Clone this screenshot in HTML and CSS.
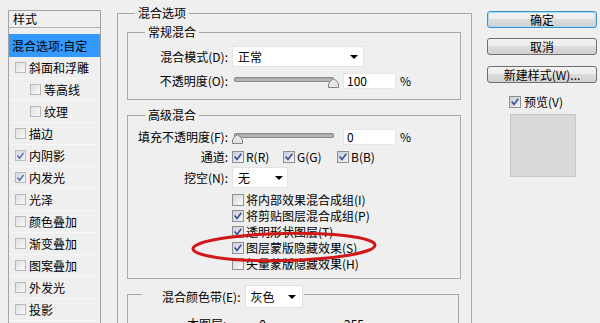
FILE: index.html
```html
<!DOCTYPE html>
<html lang="zh-CN">
<head>
<meta charset="utf-8">
<title>图层样式</title>
<link rel="stylesheet" href="styles.css">
</head>
<body>
<div class="dialog">
  <div class="styles-panel">
    <div class="sp-title">样式</div>
    <div class="sp-active">混合选项:自定</div>
    <div class="sp-item"><span class="cb sm"></span>斜面和浮雕</div>
    <div class="sp-item sub"><span class="cb sm"></span>等高线</div>
    <div class="sp-item sub"><span class="cb sm"></span>纹理</div>
    <div class="sp-item"><span class="cb sm"></span>描边</div>
    <div class="sp-item"><span class="cb sm on"><svg class="ck" viewBox="0 0 11 11"><path d="M2.3 5.6 L4.4 8.2 L8.6 2.6"/></svg></span>内阴影</div>
    <div class="sp-item"><span class="cb sm on"><svg class="ck" viewBox="0 0 11 11"><path d="M2.3 5.6 L4.4 8.2 L8.6 2.6"/></svg></span>内发光</div>
    <div class="sp-item"><span class="cb sm"></span>光泽</div>
    <div class="sp-item"><span class="cb sm"></span>颜色叠加</div>
    <div class="sp-item"><span class="cb sm"></span>渐变叠加</div>
    <div class="sp-item"><span class="cb sm"></span>图案叠加</div>
    <div class="sp-item"><span class="cb sm"></span>外发光</div>
    <div class="sp-item"><span class="cb sm"></span>投影</div>
  </div>

  <div class="main">
    <div class="group outer">
      <div class="legend">混合选项</div>

      <div class="group g1">
        <div class="legend">常规混合</div>
        <div class="row r-mode">
          <span class="lbl">混合模式(D):</span>
          <div class="select s-mode"><span>正常</span><i class="arrow"></i></div>
        </div>
        <div class="row r-op">
          <span class="lbl">不透明度(O):</span>
          <div class="slider">
            <div class="track"></div>
            <svg class="thumb t-right" viewBox="0 0 11 10"><path d="M0.5 9.5 L0.5 6 Q1.5 2.5 5.5 0.7 Q9.5 2.5 10.5 6 L10.5 9.5 Z"/></svg>
          </div>
          <div class="num">100</div>
          <span class="pct">%</span>
        </div>
      </div>

      <div class="group g2">
        <div class="legend">高级混合</div>
        <div class="row r-fill">
          <span class="lbl">填充不透明度(F):</span>
          <div class="slider">
            <div class="track"></div>
            <svg class="thumb t-left" viewBox="0 0 11 10"><path d="M0.5 9.5 L0.5 6 Q1.5 2.5 5.5 0.7 Q9.5 2.5 10.5 6 L10.5 9.5 Z"/></svg>
          </div>
          <div class="num">0</div>
          <span class="pct">%</span>
        </div>
        <div class="row r-ch">
          <span class="lbl">通道:</span>
          <span class="ch ch-r"><span class="cb on"><svg class="ck" viewBox="0 0 11 11"><path d="M2.3 5.6 L4.4 8.2 L8.6 2.6"/></svg></span>R(R)</span>
          <span class="ch ch-g"><span class="cb on"><svg class="ck" viewBox="0 0 11 11"><path d="M2.3 5.6 L4.4 8.2 L8.6 2.6"/></svg></span>G(G)</span>
          <span class="ch"><span class="cb on"><svg class="ck" viewBox="0 0 11 11"><path d="M2.3 5.6 L4.4 8.2 L8.6 2.6"/></svg></span>B(B)</span>
        </div>
        <div class="row r-ko">
          <span class="lbl">挖空(N):</span>
          <div class="select s-ko"><span>无</span><i class="arrow"></i></div>
        </div>
        <div class="checks">
          <div class="chk"><span class="cb"></span>将内部效果混合成组(I)</div>
          <div class="chk"><span class="cb on"><svg class="ck" viewBox="0 0 11 11"><path d="M2.3 5.6 L4.4 8.2 L8.6 2.6"/></svg></span>将剪贴图层混合成组(P)</div>
          <div class="chk"><span class="cb on"><svg class="ck" viewBox="0 0 11 11"><path d="M2.3 5.6 L4.4 8.2 L8.6 2.6"/></svg></span>透明形状图层(T)</div>
          <div class="chk"><span class="cb on"><svg class="ck" viewBox="0 0 11 11"><path d="M2.3 5.6 L4.4 8.2 L8.6 2.6"/></svg></span>图层蒙版隐藏效果(S)</div>
          <div class="chk"><span class="cb"></span>矢量蒙版隐藏效果(H)</div>
        </div>
      </div>

      <div class="group g3">
        <div class="legend legend-sel">
          <span class="lbl3">混合颜色带(E):</span>
          <div class="select s-band"><span>灰色</span><i class="arrow"></i></div>
        </div>
        <div class="row r-this">
          <span class="this-lbl">本图层:</span>
          <span class="v0">0</span>
          <span class="v255">255</span>
        </div>
      </div>
    </div>
  </div>

  <div class="side">
    <div class="btn default">确定</div>
    <div class="btn b2">取消</div>
    <div class="btn b3">新建样式(W)...</div>
    <div class="preview-row"><span class="cb on"><svg class="ck" viewBox="0 0 11 11"><path d="M2.3 5.6 L4.4 8.2 L8.6 2.6"/></svg></span>预览(V)</div>
    <div class="swatch"></div>
  </div>
</div>

<svg class="annot" width="200" height="40" viewBox="0 0 200 40">
  <ellipse cx="96" cy="18" rx="91" ry="13.5" transform="rotate(-1.2 96 18)"/>
</svg>
</body>
</html>
```

FILE: styles.css
```css
* { box-sizing: border-box; }
html, body { margin: 0; padding: 0; }
body {
  width: 600px;
  height: 323px;
  overflow: hidden;
  position: relative;
  background: #efefef;
  font-family: "Noto Sans CJK SC", "Noto Sans", sans-serif;
  font-size: 12px;
  line-height: 16px;
  color: #000;
}
.dialog { display: flex; align-items: flex-start; height: 323px; }

/* left styles list */
.styles-panel {
  margin: 10px 0 0 8px;
  width: 93px;
  height: 313px;
  border: 1px solid #a3a3a3;
  border-bottom: none;
  flex: none;
}
.sp-title {
  height: 17px;
  padding-left: 4px;
  border-bottom: 1px solid #b0b0b0;
  line-height: 16px;
}
.sp-active {
  margin-top: 6px;
  height: 23px;
  line-height: 23px;
  padding-left: 3px;
  background: #3399ff;
}
.sp-item {
  height: 22px;
  display: flex;
  align-items: center;
  gap: 3px;
  padding-left: 6px;
  border-bottom: 1px solid #f7f7f7;
}
.sp-item.sub { padding-left: 21px; }

/* checkboxes */
.cb {
  flex: none;
  width: 12px;
  height: 12px;
  border: 1px solid #8e8f8f;
  background: linear-gradient(135deg, #d6d6d6, #fbfbfb);
  display: inline-flex;
  align-items: center;
  justify-content: center;
}
.cb.on { background: linear-gradient(135deg, #c9cedb, #f3f4f8); }
.cb.sm {
  width: 11px;
  height: 11px;
  border-color: #b9b9b9;
  background: linear-gradient(135deg, #e0e0e0, #f9f9f9);
}
.cb.sm.on { background: linear-gradient(135deg, #d6d9e3, #f6f6f9); }
.ck { width: 10px; height: 10px; display: block; }
.ck path { fill: none; stroke: #3e5391; stroke-width: 1.8; stroke-linecap: square; }
.cb.sm .ck path { stroke: #5a6cae; }

/* main groups */
.main { margin: 13px 0 0 16px; width: 355px; flex: none; }
.group { border: 1px solid #a8a8a8; }
.outer { height: 312px; border-bottom: none; }
.legend {
  width: max-content;
  height: 16px;
  margin: -9px 0 0 17px;
  padding: 0 3px;
  line-height: 16px;
  background: #efefef;
}
.g1, .g2, .g3 { margin-left: 9px; width: 334px; }
.g1 { margin-top: 11px; padding-bottom: 10px; }
.g2 { margin-top: 15px; padding-bottom: 6px; }
.g3 { margin-top: 15px; width: 332px; height: 40px; border-bottom: none; }

.row { display: flex; align-items: center; }
.lbl { width: 100px; margin-right: 4px; text-align: right; flex: none; }

.r-mode { margin-top: 6px; height: 21px; }
.r-op { margin-top: 6px; height: 16px; }
.r-fill { margin-top: 5px; height: 17px; }
.r-ch { margin-top: 6px; height: 12px; }
.r-ko { margin-top: 4px; height: 21px; }

.select {
  height: 21px;
  background: #fff;
  border: 1px solid #e3e3e3;
  display: flex;
  align-items: center;
  justify-content: space-between;
  padding: 0 5px 0 5px;
}
.s-mode { width: 132px; }
.s-ko { width: 56px; padding-right: 4px; }
.s-band { width: 58px; height: 23px; padding-right: 6px; }
.arrow {
  width: 0;
  height: 0;
  border-left: 4px solid transparent;
  border-right: 4px solid transparent;
  border-top: 4px solid #000;
}

.slider { position: relative; width: 108px; height: 16px; flex: none; }
.track {
  margin: 4px 0 0 2px;
  width: 100px;
  height: 5px;
  border-radius: 3px;
  background: linear-gradient(#8f8f8f, #bdbdbd 55%, #a5a5a5);
  box-shadow: inset 0 0 0 1px #8c8c8c;
}
.thumb { position: absolute; top: 5px; width: 11px; height: 10px; }
.thumb path { fill: #e4e4e4; stroke: #858585; stroke-width: 1; }
.t-right { left: 96px; }
.t-left { left: 0; }
.num {
  margin-left: 3px;
  width: 53px;
  height: 16px;
  background: #fff;
  border: 1px solid #e6e6e6;
  padding-left: 3px;
  line-height: 14px;
}
.pct { margin-left: 4px; }

.ch { display: inline-flex; align-items: center; gap: 2px; }
.ch-r { width: 51px; }
.ch-g { width: 54px; }

.checks { margin-top: 4px; padding-left: 104px; }
.chk { height: 16px; display: flex; align-items: center; gap: 2px; }

.legend-sel {
  height: 23px;
  margin: -10px 0 0 14px;
  padding: 0 1px 0 20px;
  display: flex;
  align-items: center;
  gap: 4px;
}
.r-this { margin-top: 8px; }
.this-lbl { margin-left: 59px; }
.v0 { margin-left: 33px; }
.v255 { margin-left: 78px; }

/* right buttons */
.side { margin: 11px 0 0 15px; width: 110px; display: flex; flex-direction: column; flex: none; }
.btn {
  height: 17px;
  border: 1px solid #707070;
  border-radius: 3px;
  background: linear-gradient(#f3f3f3, #ebebeb 50%, #dddddd 50%, #d0d0d0);
  text-align: center;
  line-height: 15px;
}
.btn.default {
  border-color: #3c8fd0;
  box-shadow: inset 0 0 0 1px #a9dcf6;
}
.b2 { margin-top: 10px; }
.b3 { margin-top: 11px; }
.preview-row {
  margin-top: 13px;
  height: 12px;
  padding-left: 22px;
  display: flex;
  align-items: center;
  gap: 3px;
}
.swatch {
  margin: 6px 0 0 23px;
  width: 66px;
  height: 63px;
  background: #d9d9d9;
  border: 1px solid #c6c6c6;
}

/* red annotation ellipse */
.annot { position: absolute; left: 188px; top: 229px; }
.annot ellipse { fill: none; stroke: #d01818; stroke-width: 3; }
```
